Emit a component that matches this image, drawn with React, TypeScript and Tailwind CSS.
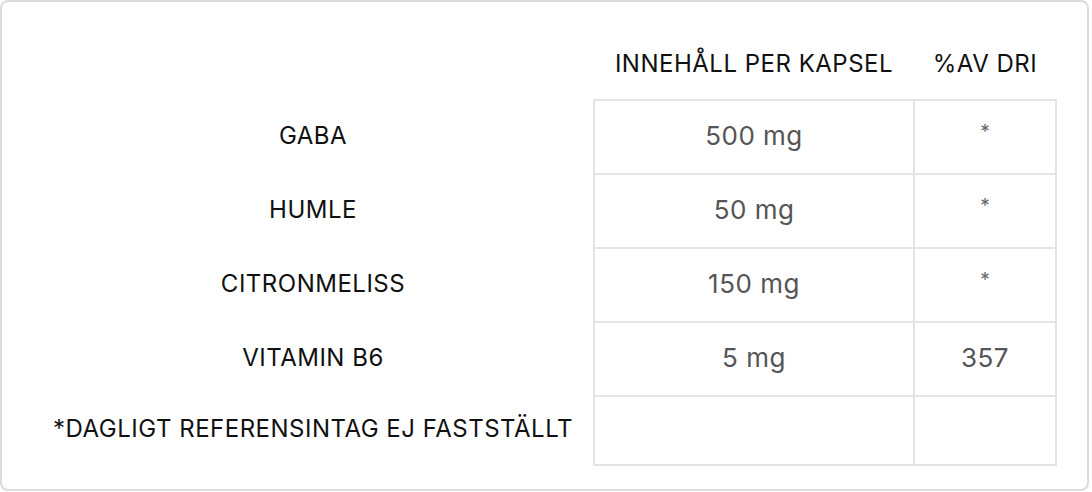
import React from "react";

interface Row {
  name: string;
  amount: string;
  dri: string;
}

const rows: Row[] = [
  { name: "GABA", amount: "500 mg", dri: "*" },
  { name: "HUMLE", amount: "50 mg", dri: "*" },
  { name: "CITRONMELISS", amount: "150 mg", dri: "*" },
  { name: "VITAMIN B6", amount: "5 mg", dri: "357" },
];

const App = () => {
  return (
    <div className="w-[1092px] h-[492px] bg-white font-['Inter','Liberation_Sans',sans-serif]">
      <div className="w-[1089px] h-[491px] border-2 border-[#dcdcdc] rounded-lg bg-white pl-[31px] pt-[39px]">
        <table className="border-collapse">
          <thead>
            <tr className="h-[59px] align-top">
              <th className="w-[561px]"></th>
              <th className="w-[320px] text-[24px] tracking-[0.5px] font-normal text-[#111] leading-[46px]">
                INNEHÅLL PER KAPSEL
              </th>
              <th className="w-[142px] text-[24px] tracking-[0.5px] font-normal text-[#111] leading-[46px]">
                %AV DRI
              </th>
            </tr>
          </thead>
          <tbody>
            {rows.map((r) => (
              <tr key={r.name} className="h-[74px]">
                <td className="text-center text-[24px] tracking-[0.5px] text-[#111] pb-[2px]">
                  {r.name}
                </td>
                <td className="text-center text-[26px] tracking-[0.5px] text-[#555] border-2 border-[#e4e4e4] pb-[4px]">
                  {r.amount}
                </td>
                <td
                  className={
                    r.dri === "*"
                      ? "text-center text-[19px] text-[#666] border-2 border-[#e4e4e4] pb-[10px]"
                      : "text-center text-[26px] tracking-[0.5px] text-[#555] border-2 border-[#e4e4e4] pb-[4px]"
                  }
                >
                  {r.dri}
                </td>
              </tr>
            ))}
            <tr className="h-[69px]">
              <td className="text-center text-[24px] tracking-[0.5px] text-[#111] pb-[4px]">
                *DAGLIGT REFERENSINTAG EJ FASTSTÄLLT
              </td>
              <td className="border-2 border-[#e4e4e4]"></td>
              <td className="border-2 border-[#e4e4e4]"></td>
            </tr>
          </tbody>
        </table>
      </div>
    </div>
  );
};

export default App;
